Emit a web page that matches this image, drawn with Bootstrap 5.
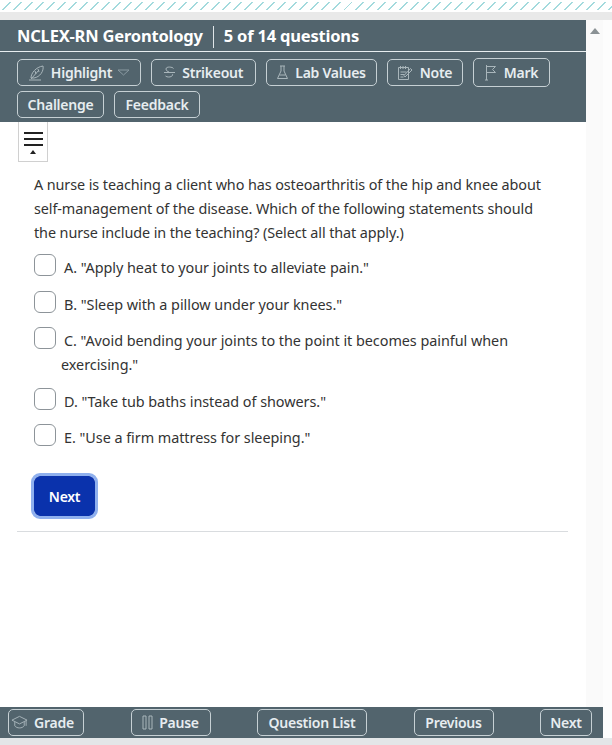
<!DOCTYPE html>
<html lang="en">
<head>
<meta charset="utf-8">
<title>NCLEX-RN Gerontology</title>
<link href="https://cdn.jsdelivr.net/npm/bootstrap@5.3.0/dist/css/bootstrap.min.css" rel="stylesheet">
<style>
html,body{height:745px;overflow:hidden}
body{font-family:"Noto Sans","Liberation Sans",sans-serif;font-size:14px;color:#333;background:#fdfdfd}
.shell{height:745px}
.hatch{height:12px;padding-top:2px;background:#fff}
.hatch div{height:8px;background:repeating-linear-gradient(135deg,#fff 0 6.400px,#a3dadd 6.400px 7.800px)}
.gutter{height:8px;background:#e9e9e9}
.paneline{width:603px}
.scrollpane{min-height:0}
.content{width:586px;background:#fff}
.scrollcol{width:17px;background:#fafafa}
.arrow{width:0;height:0;border-left:5px solid transparent;border-right:5px solid transparent;border-bottom:6px solid #8a9194;margin:8px auto 0}
.bar{background:#52646d;color:#fff}
.titlerow{height:32px;padding:2px 0 0 17px;font-weight:700;font-size:16.500px;letter-spacing:-.2px;border-bottom:1px solid #e8eef0;line-height:1}
.tsep{border-left:1px solid #dfe5e8;height:22px;margin:0 10px 0 10px}
.tools{padding:7px 17px 5px;gap:4px 10px;width:586px;height:70px;align-content:flex-start}
.tb{--bs-btn-padding-x:9px;--bs-btn-padding-y:0;--bs-btn-font-size:14px;--bs-btn-font-weight:600;--bs-btn-color:#e7edf0;--bs-btn-border-color:#c6d0d4;--bs-btn-hover-color:#fff;--bs-btn-hover-border-color:#fff;--bs-btn-border-radius:5px;letter-spacing:-.25px;height:27px;display:inline-flex;align-items:center;justify-content:center;gap:6px;white-space:nowrap;line-height:1}
.tb svg{flex:none;color:#a9b6bb}
.tb svg.chev{color:#8a9aa2}
.w-hl{width:124px;gap:5px}.w-st{width:104.500px}.w-lab{width:111px}.w-note{width:76px}.w-mark{width:77px;height:29px;margin-top:-1px}.w-ch{width:87px}.w-fb{width:86px}
.w-gr{width:76px;justify-content:flex-start;--bs-btn-padding-x:2px}.w-pa{width:80px}.w-ql{width:110px}.w-pr{width:80px}.w-nx{width:52px}
.togglebox{width:30px;height:40px;margin-left:18px;background:#fff;border:1px solid #d0d0d0;border-top:0;padding:10px 0 0}
.togglebox i{display:block;width:19px;height:2px;background:#222;margin:0 auto 4px}
.togglebox b{display:block;width:0;height:0;margin:0 auto;border-left:3px solid transparent;border-right:3px solid transparent;border-bottom:4px solid #222}
.qbody{padding:11px 40px 0 34px;font-size:14.400px;letter-spacing:-.09px;line-height:24px}
.qtext{margin:0 0 9px}
.opt{margin-bottom:10.500px;position:relative;min-height:26px;letter-spacing:-.04px}
.opt .form-check-input{float:none;width:22px;height:22px;margin:0 8px 0 0;border:1.500px solid #8d9499;border-radius:6px;vertical-align:-3px}
.wrapopt{padding-left:27px}
.wrapopt .form-check-input{margin-left:-27px}
.nextb{--bs-btn-bg:#0a32ac;--bs-btn-border-color:#0a32ac;--bs-btn-color:#fff;--bs-btn-font-size:14px;--bs-btn-font-weight:600;--bs-btn-border-radius:6px;--bs-btn-hover-bg:#0a32ac;--bs-btn-hover-color:#fff;width:61px;height:40px;padding:0;letter-spacing:-.3px;outline:3px solid #8fb0ee;outline-offset:0;margin:15.500px 0 4.500px 0}
.rule{width:551px;margin:10px 0 0 17px;border-top:1px solid #d9dcdf;opacity:1}
.foot{height:31px;width:603px;padding:2px 11px 2px 8px}
.basegray{height:7px;background:#e3e6e8}
</style>
</head>
<body>
<div class="shell d-flex flex-column">
  <div class="hatch"><div></div></div>
  <div class="gutter"></div>
  <div class="paneline d-flex flex-grow-1 scrollpane">
    <div class="content">
      <div class="bar">
        <div class="titlerow d-flex align-items-center"><span>NCLEX-RN Gerontology</span><span class="tsep"></span><span>5 of 14 questions</span></div>
        <div class="tools d-flex flex-wrap">
          <button class="btn tb w-hl" type="button"><svg width="18" height="16" viewBox="0 0 18 16" fill="none" stroke="currentColor" stroke-width="1"><path d="M1 15h12M3 13c0-5 5-11 12-12 1 5-3 11-9 12zM3 14 11 5M7 6l1 3M10 4l1 3"/></svg>Highlight<svg class="chev" width="13" height="7" viewBox="0 0 13 7" fill="none" stroke="currentColor" stroke-width="1"><path d="M1 1h11L6.500 6z"/></svg></button>
          <button class="btn tb w-st" type="button"><svg width="13" height="15" viewBox="0 0 13 15" fill="none" stroke="currentColor" stroke-width="1"><path d="M10.500 3.500C10 2 3 1 3 4c0 1.500 1.500 2.500 3 3M1 7.500h11M9.500 9c1 3-5 4-7 2"/></svg>Strikeout</button>
          <button class="btn tb w-lab" type="button"><svg width="13" height="15" viewBox="0 0 13 15" fill="none" stroke="currentColor" stroke-width="1"><path d="M4 1h5M5 1v5L1.500 13.500h10L8 6V1M3.500 10h6"/></svg>Lab Values</button>
          <button class="btn tb w-note" type="button"><svg width="17" height="16" viewBox="0 0 17 16" fill="none" stroke="currentColor" stroke-width="1"><path d="M1.500 2.500h10v12h-10zM3.500 1v3M6 1v3M8.500 1v3M3.500 7h6M3.500 9.500h4M3.500 12h3M8 12l7-7-1.500-1.500-6.500 7z"/></svg>Note</button>
          <button class="btn tb w-mark" type="button"><svg width="14" height="17" viewBox="0 0 14 17" fill="none" stroke="currentColor" stroke-width="1"><path d="M2.500 1v15M1 16h3M2.500 2.500h9l-3 3 3 3h-9"/></svg>Mark</button>
          <button class="btn tb w-ch" type="button">Challenge</button>
          <button class="btn tb w-fb" type="button">Feedback</button>
        </div>
      </div>
      <div class="togglebox"><i></i><i></i><i></i><b></b></div>
      <div class="qbody">
        <p class="qtext">A nurse is teaching a client who has osteoarthritis of the hip and knee about self-management of the disease. Which of the following statements should the nurse include in the teaching? (Select all that apply.)</p>
        <div class="opt"><input class="form-check-input" type="checkbox" aria-label="A"><span>A. "Apply heat to your joints to alleviate pain."</span></div>
        <div class="opt"><input class="form-check-input" type="checkbox" aria-label="B"><span>B. "Sleep with a pillow under your knees."</span></div>
        <div class="opt wrapopt"><input class="form-check-input" type="checkbox" aria-label="C"><span>C. "Avoid bending your joints to the point it becomes painful when exercising."</span></div>
        <div class="opt"><input class="form-check-input" type="checkbox" aria-label="D"><span>D. "Take tub baths instead of showers."</span></div>
        <div class="opt"><input class="form-check-input" type="checkbox" aria-label="E"><span>E. "Use a firm mattress for sleeping."</span></div>
        <button class="btn nextb" type="button">Next</button>
      </div>
      <hr class="rule">
    </div>
    <div class="scrollcol"><div class="arrow"></div></div>
  </div>
  <div class="bar foot d-flex justify-content-between align-items-center">
    <button class="btn tb w-gr" type="button"><svg width="17" height="15" viewBox="0 0 18 15" fill="none" stroke="currentColor" stroke-width="1"><path d="M9 1 1 5l8 4 8-4zM4 7v4c2 3 8 3 10 0V7M16 5.500V11"/></svg>Grade</button>
    <button class="btn tb w-pa" type="button"><svg width="11" height="15" viewBox="0 0 11 15" fill="none" stroke="currentColor" stroke-width="1"><path d="M1 1h3v13H1zM7 1h3v13H7z"/></svg>Pause</button>
    <button class="btn tb w-ql" type="button">Question List</button>
    <button class="btn tb w-pr" type="button">Previous</button>
    <button class="btn tb w-nx" type="button">Next</button>
  </div>
  <div class="basegray"></div>
</div>
<script src="https://cdn.jsdelivr.net/npm/bootstrap@5.3.0/dist/js/bootstrap.bundle.min.js"></script>
</body>
</html>
